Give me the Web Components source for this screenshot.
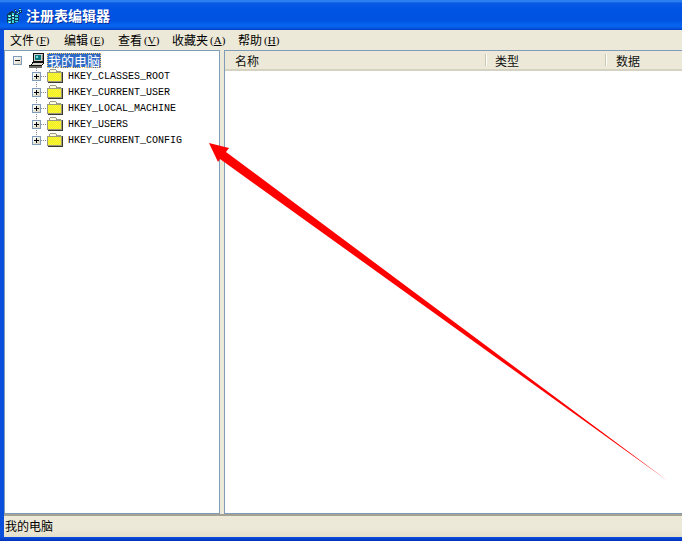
<!DOCTYPE html>
<html>
<head>
<meta charset="utf-8">
<style>
  html, body { margin: 0; padding: 0; height: 100%; overflow: hidden; background: #ece9d8; }
</style>
</head>
<body>
<template id="regedit-window-tpl">
  <style>
    :host {
      display: flex;
      flex-direction: column;
      position: relative;
      width: 682px;
      height: 541px;
      overflow: hidden;
      background: #ece9d8;
      font-family: "Noto Sans CJK SC", "Liberation Sans", sans-serif;
      font-size: 12px;
      color: #000;
    }
    .body {
      flex: 1;
      display: flex;
      flex-direction: column;
      min-height: 0;
      border-left: 4px solid #0a4fdc;
    }
    .panes {
      flex: 1;
      display: flex;
      min-height: 0;
      gap: 4px;
    }
    .bottom {
      height: 4px;
      background: linear-gradient(#0a4fe0, #0033b8);
    }
    ::slotted(reg-tree) { width: 216px; }
    ::slotted(reg-list) { flex: 1; }
  </style>
  <slot name="title"></slot>
  <div class="body">
    <slot name="menu"></slot>
    <div class="panes"><slot name="pane"></slot></div>
    <slot name="status"></slot>
  </div>
  <div class="bottom"></div>
  <slot name="overlay"></slot>
</template>

<template id="reg-title-tpl">
  <style>
    :host {
      display: flex;
      align-items: center;
      gap: 4px;
      height: 30px;
      flex: none;
      box-sizing: border-box;
      padding: 0 0 0 6px;
      background: linear-gradient(#1a74ec 0, #3a8cf6 1px, #0a5ae6 3px, #0054e3 9px, #0053e0 20px, #0664f0 25px, #0a62ec 27px, #003fc4 30px);
      color: #fff;
      font-size: 14px;
      font-weight: bold;
      text-shadow: 1px 1px 0 #0a2f9c;
    }
    svg { display: block; flex: none; margin-top: 2px; }
  </style>
  <svg width="16" height="16" viewBox="0 0 16 16" shape-rendering="crispEdges">
    <path d="M1 6 6 3 11 6 13 8 13 13 7 16 1 15Z" fill="#0e3a5e"/>
    <path d="M2 7h3v2h-3zM6 5h2v3h-2zM9 7h3v2h-3zM2 10h3v2h-3zM6 9h2v2h-2zM9 10h3v2h-3zM2 13h3v2h-3zM6 12h2v3h-2zM9 13h3v1h-3z" fill="#3fd4d4"/>
    <path d="M3 8h1v1h-1zM6 7h2v1h-2zM3 11h1v1h-1zM7 10h1v1h-1zM3 14h1v1h-1z" fill="#d8fbf6"/>
    <path d="M8 1h2v2h1v1h2V0h2v2h1v3h-2v1h-2v1h-1V5H9V3H8Z" fill="#123a70"/>
    <path d="M9 2h1v1h-1zM13 1h2v1h-2zM14 3h1v1h-1zM11 5h1v1h-1zM12 4h1v1h-1z" fill="#6fe8f0"/>
  </svg>
  <span><slot></slot></span>
</template>

<template id="reg-menu-tpl">
  <style>
    :host {
      display: flex;
      align-items: center;
      height: 20px;
      flex: none;
      box-sizing: border-box;
      padding: 0 0 1px 6px;
    }
  </style>
  <slot></slot>
</template>

<template id="reg-menu-item-tpl">
  <style>
    :host {
      display: inline-flex;
      align-items: center;
      white-space: nowrap;
      margin-right: 12px;
      font-size: 12px;
    }
    .key {
      font-family: "Liberation Serif", serif;
      font-size: 11px;
      width: 16px;
      margin-left: 2px;
    }
    u { text-underline-offset: 1px; }
  </style>
  <slot></slot>
  <span class="key">(<u id="k"></u>)</span>
</template>

<template id="reg-tree-tpl">
  <style>
    :host {
      display: block;
      box-sizing: border-box;
      background: #fff;
      border: 1px solid #7f9db9;
      padding: 1px 0 0 8px;
      flex: none;
    }
  </style>
  <slot></slot>
</template>

<template id="reg-node-tpl">
  <style>
    :host {
      display: flex;
      align-items: center;
      height: 16px;
      font-family: "Liberation Mono", monospace;
      font-size: 10px;
      white-space: nowrap;
    }
    :host([root]) {
      font-family: "Noto Sans CJK SC", sans-serif;
      font-size: 13px;
    }
    :host(:not([root])) {
      padding-left: 19px;
      background: repeating-linear-gradient(#8a8a8a 0 1px, transparent 1px 2px) 23px 0 / 1px 100% no-repeat;
    }
    :host([last]) { background-size: 1px 8px; }
    .exp {
      box-sizing: border-box;
      width: 9px;
      height: 9px;
      flex: none;
      position: relative;
      border: 1px solid #7f9db9;
      background: linear-gradient(135deg, #fff, #d8d4c4);
    }
    .exp::before {
      content: "";
      position: absolute;
      left: 1px; top: 3px;
      width: 5px; height: 1px;
      background: #000;
    }
    :host(:not([root])) .exp::after {
      content: "";
      position: absolute;
      left: 3px; top: 1px;
      width: 1px; height: 5px;
      background: #000;
    }
    .dots {
      width: 6px;
      height: 1px;
      flex: none;
      background: repeating-linear-gradient(90deg, #8a8a8a 0 1px, transparent 1px 2px);
    }
    :host([root]) .dots { background: none; }
    svg { display: block; flex: none; }
    .label { margin-left: 5px; }
    :host([root]) .label {
      margin-left: 2px;
      padding: 0 1px;
      line-height: 15px;
      height: 15px;
      background: #316ac5;
      color: #fff;
      outline: 1px dotted #ffc65c;
      outline-offset: -1px;
    }
  </style>
  <span class="exp"></span><span class="dots"></span>
  <span id="ic"></span>
  <span class="label"><slot></slot></span>
</template>

<template id="reg-list-tpl">
  <style>
    :host {
      display: block;
      box-sizing: border-box;
      background: #fff;
      border: 1px solid #7f9db9;
      border-right: 0;
    }
    .head {
      display: grid;
      grid-template-columns: 261px 120px 1fr;
      height: 20px;
      box-sizing: border-box;
      background: #ece9d8;
      border-bottom: 2px solid #d6d2c2;
    }
  </style>
  <div class="head"><slot></slot></div>
</template>

<template id="reg-col-tpl">
  <style>
    :host {
      display: flex;
      align-items: center;
      padding-left: 10px;
      position: relative;
      font-size: 12px;
      color: #111;
    }
    :host(:nth-child(2)) { padding-left: 9px; }
    :host(:not(:last-child))::after {
      content: "";
      position: absolute;
      right: 0; top: 3px; bottom: 3px;
      width: 1px;
      background: #c9c6b6;
      box-shadow: 1px 0 0 #fff;
    }
  </style>
  <slot></slot>
</template>

<template id="reg-status-tpl">
  <style>
    :host {
      display: flex;
      align-items: center;
      height: 23px;
      flex: none;
      box-sizing: border-box;
      padding: 0 0 2px 1px;
      border-top: 2px solid #a5a294;
      background: linear-gradient(#ece9d8 0, #ece9d8 60%, #e2dfcc 100%);
      font-size: 12px;
    }
  </style>
  <slot></slot>
</template>

<template id="red-arrow-tpl">
  <style>
    :host { position: absolute; left: 0; top: 0; width: 682px; height: 541px; pointer-events: none; }
    svg { display: block; }
  </style>
  <svg width="682" height="541" viewBox="0 0 682 541">
    <polygon points="209,143 229,148 226,152 668,481 220,159 218,162" fill="#ff0000"/>
  </svg>
</template>

<regedit-window>
  <reg-title slot="title">注册表编辑器</reg-title>
  <reg-menu slot="menu">
    <reg-menu-item k="F">文件</reg-menu-item>
    <reg-menu-item k="E">编辑</reg-menu-item>
    <reg-menu-item k="V">查看</reg-menu-item>
    <reg-menu-item k="A">收藏夹</reg-menu-item>
    <reg-menu-item k="H">帮助</reg-menu-item>
  </reg-menu>
  <reg-tree slot="pane">
    <reg-node root>我的电脑</reg-node>
    <reg-node>HKEY_CLASSES_ROOT</reg-node>
    <reg-node>HKEY_CURRENT_USER</reg-node>
    <reg-node>HKEY_LOCAL_MACHINE</reg-node>
    <reg-node>HKEY_USERS</reg-node>
    <reg-node last>HKEY_CURRENT_CONFIG</reg-node>
  </reg-tree>
  <reg-list slot="pane">
    <reg-col>名称</reg-col>
    <reg-col>类型</reg-col>
    <reg-col>数据</reg-col>
  </reg-list>
  <reg-status slot="status">我的电脑</reg-status>
  <red-arrow slot="overlay"></red-arrow>
</regedit-window>

<script>
  const FOLDER = `<svg width="16" height="14" viewBox="0 0 16 14" shape-rendering="crispEdges">
    <defs><pattern id="d" width="2" height="2" patternUnits="userSpaceOnUse">
      <rect width="2" height="2" fill="#ffff00"/><rect width="1" height="1" fill="#ece85a"/><rect x="1" y="1" width="1" height="1" fill="#ece85a"/>
    </pattern></defs>
    <path d="M2.5 4V1.5L3.5.5H8.5L10 2.5H13.5V4" fill="#fffde0" stroke="#9a9a86"/>
    <rect x="0.5" y="3.5" width="14" height="9" fill="url(#d)" stroke="#9a9a82"/>
    <path d="M15.5 3V13.5H1" fill="none" stroke="#3a3a30"/>
  </svg>`;
  const COMPUTER = `<svg width="17" height="15" viewBox="0 0 17 15" shape-rendering="crispEdges">
    <rect x="5.5" y=".5" width="10" height="8" fill="#d0d0c8" stroke="#111"/>
    <rect x="7" y="2" width="6" height="5" fill="#0a7a80"/>
    <rect x="8" y="3" width="2" height="2" fill="#7fd8d8"/>
    <path d="M14 2h1v6h-1z" fill="#8a8a82"/>
    <path d="M4 9h12v1h-1v1h-1v1h-1v1H2v-1h1v-1h1Z" fill="#d8d8d0"/>
    <path d="M4 9h12M4 9v2M3 11v1M15.5 9v2M14 11v1" stroke="#111"/>
    <path d="M1 12h13v3H1Z" fill="#6a6a62"/>
    <path d="M1 12h13v1H1Z" fill="#111"/>
  </svg>`;

  function simple(name, tplId, setup) {
    customElements.define(name, class extends HTMLElement {
      constructor() {
        super();
        this.attachShadow({ mode: 'open' });
        this.shadowRoot.appendChild(document.getElementById(tplId).content.cloneNode(true));
      }
      connectedCallback() {
        if (setup) setup(this);
      }
    });
  }

  simple('regedit-window', 'regedit-window-tpl');
  simple('reg-title', 'reg-title-tpl');
  simple('reg-menu', 'reg-menu-tpl');
  simple('reg-menu-item', 'reg-menu-item-tpl', el => {
    el.shadowRoot.getElementById('k').textContent = el.getAttribute('k');
  });
  simple('reg-tree', 'reg-tree-tpl');
  simple('reg-node', 'reg-node-tpl', el => {
    el.shadowRoot.getElementById('ic').innerHTML = el.hasAttribute('root') ? COMPUTER : FOLDER;
  });
  simple('reg-list', 'reg-list-tpl');
  simple('reg-col', 'reg-col-tpl');
  simple('reg-status', 'reg-status-tpl');
  simple('red-arrow', 'red-arrow-tpl');
</script>
</body>
</html>
